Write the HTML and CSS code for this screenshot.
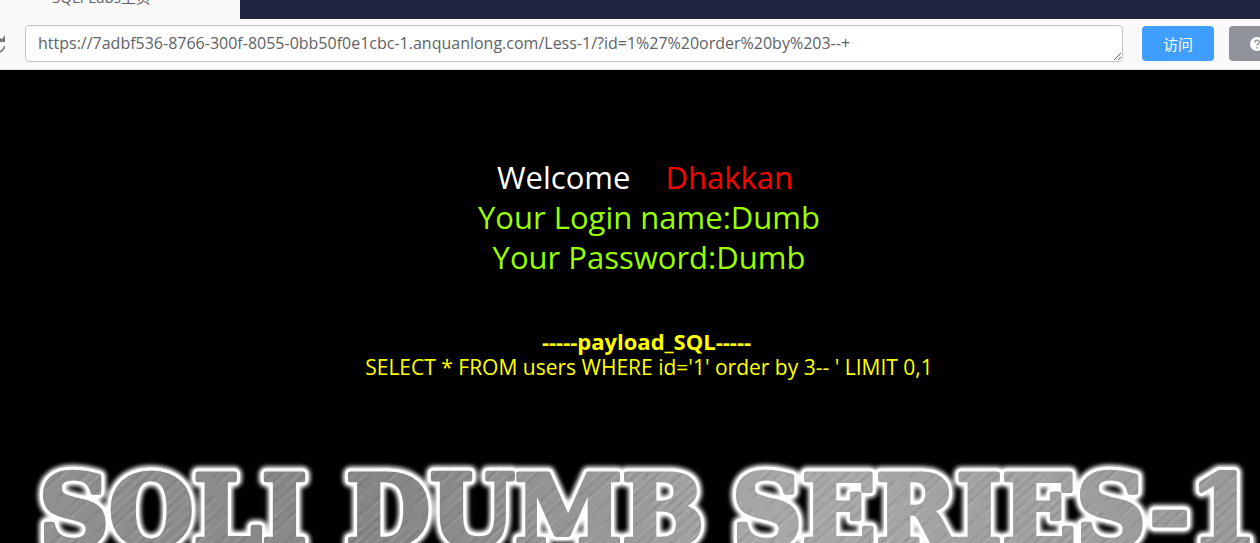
FILE: index.html
```html
<!DOCTYPE html>
<html lang="zh">
<head>
<meta charset="utf-8">
<title>SQLi-Labs主页</title>
<link rel="stylesheet" href="styles.css">
</head>
<body>
<header class="tabs"><div class="tab"><span>SQLi-Labs主页</span></div></header>
<form class="toolbar">
  <button class="reload" type="button" aria-label="刷新">
    <svg width="5" height="22" viewBox="0 0 5 22"><path d="M0 5L2 6L5 2V9H0z" fill="#777"/><path d="M5 13C4 16 2 18 0 19" fill="none" stroke="#888" stroke-width="2"/></svg>
  </button>
  <textarea class="address" rows="1" aria-label="URL" spellcheck="false">https://7adbf536-8766-300f-8055-0bb50f0e1cbc-1.anquanlong.com/Less-1/?id=1%27%20order%20by%203--+</textarea>
  <button class="visit" type="button">访问</button>
  <button class="help" type="button" aria-label="帮助">
    <svg width="14" height="14" viewBox="0 0 14 14"><circle cx="7" cy="7" r="7" fill="#fff"/><path d="M5 5.500C5 2.500 9.200 2.700 9.200 5.200C9.200 6.800 7 6.800 7 8.600M7 10v1.500" fill="none" stroke="#909399" stroke-width="1.500"/></svg>
  </button>
</form>
<main class="page">
  <div class="welcome">
    <p class="greeting"><span class="white">Welcome</span><span class="name">Dhakkan</span></p>
    <p>Your Login name:Dumb</p>
    <p>Your Password:Dumb</p>
  </div>
  <div class="payload">
    <p class="label"><b>-----payload_SQL-----</b></p>
    <p>SELECT * FROM users WHERE id='1' order by 3-- ' LIMIT 0,1</p>
  </div>
  <svg class="banner" height="96" role="img" aria-label="SQLI DUMB SERIES-1">
    <defs>
      <linearGradient id="steel" gradientUnits="userSpaceOnUse" x1="0" y1="0" x2="1260" y2="0">
        <stop offset="0" stop-color="#929292"/><stop offset=".3" stop-color="#858585"/><stop offset=".62" stop-color="#a8a8a8"/><stop offset="1" stop-color="#989898"/>
      </linearGradient>
      <pattern id="brush" width="37" height="130" patternUnits="userSpaceOnUse" patternTransform="rotate(48)">
        <path d="M2 0v90M9 20v80M15 0v50M22 30v90M31 0v70" stroke="#fff" stroke-opacity=".12"/>
        <path d="M5 0v60M12 30v90M19 50v70M27 0v80M35 40v80" stroke="#000" stroke-opacity=".1"/>
      </pattern>
      <filter id="glow" x="-5%" y="-30%" width="110%" height="160%"><feGaussianBlur stdDeviation="2"/></filter>
    </defs>
    <g class="lettering">
      <text id="word" y="92"><tspan x="39">SQLI</tspan> <tspan x="346">DUMB</tspan> <tspan x="732">SERIES-1</tspan></text>
      <use href="#word" class="halo" filter="url(#glow)"/>
      <use href="#word" class="rim"/>
      <use href="#word" class="steel"/>
      <use href="#word" class="brush"/>
    </g>
  </svg>
</main>
</body>
</html>
```
FILE: styles.css
```css
* { box-sizing: border-box; }
body { margin: 0; background: #000; overflow: hidden; font-family: "Open Sans", "Noto Sans CJK SC", sans-serif; }
p { margin: 0; }
.tabs { background: #1f2340; height: 19px; overflow: hidden; display: flex; }
.tab { width: 240px; background: #fafafa; color: #606266; font-size: 15px; line-height: 20px; padding: 0 52px 12px; display: flex; align-items: flex-end; }
.toolbar { display: flex; align-items: center; background: #fafafa; border-bottom: 1px solid #ddd; padding: 6px 0 7px; overflow: hidden; }
button { border: 0; padding: 0; font-family: inherit; flex: none; }
.reload { width: 25px; background: none; text-align: left; }
.reload svg, .help svg { display: block; }
.address { flex: 1; min-width: 0; height: 37px; border: 1px solid #c4c4c4; border-radius: 4px; background: #fff; color: #606266; font-family: "Open Sans", sans-serif; font-size: 16px; line-height: 21px; padding: 7px 12px; overflow: hidden; resize: both; outline: none; }
.visit { width: 72px; height: 35px; margin: 0 15px 0 19px; border-radius: 4px; background: #409eff; color: #fff; font-size: 15px; }
.help { width: 31px; height: 35px; padding-left: 21px; border-radius: 4px 0 0 4px; background: #909399; overflow: hidden; }
.page { text-align: center; }
.welcome { padding: 87px 0 0 38px; color: #99ff00; font-size: 31px; line-height: 40px; }
.greeting { padding-right: 8px; }
.white { color: #fff; }
.name { color: #f00; margin-left: 35px; }
.payload { padding: 51px 0 0 38px; color: #ff0; font-size: 21px; line-height: 26px; }
.label { padding-right: 5px; font-size: 22px; }
.banner { display: block; width: 100%; margin-top: 73px; }
.lettering { font-family: "DejaVu Serif", serif; font-weight: bold; font-size: 97px; }
#word { stroke-linejoin: round; }
.halo { fill: #fff; stroke: #fff; stroke-width: 15px; }
.rim { fill: #fff; stroke: #fff; stroke-width: 11px; }
.steel { fill: url(#steel); stroke: url(#steel); stroke-width: 5px; }
.brush { fill: url(#brush); stroke: url(#brush); stroke-width: 5px; }
```
